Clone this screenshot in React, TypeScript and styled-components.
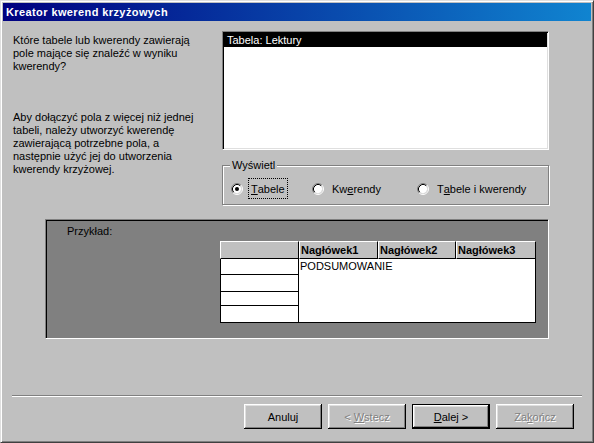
import styled, { createGlobalStyle, css } from "styled-components";

const Global = createGlobalStyle`
  html, body { margin: 0; padding: 0; background: #c0c0c0; }
  body {
    font-family: "Liberation Sans", Arial, sans-serif;
    font-size: 11px;
    color: #000;
  }
`;

const Window = styled.div`
  box-sizing: border-box;
  width: 594px;
  height: 443px;
  background: #c0c0c0;
  border: 1px solid;
  border-color: #dfdfdf #404040 #404040 #dfdfdf;
  box-shadow: inset 1px 1px #fff, inset -1px -1px #808080;
  padding: 2px;
  display: flex;
  flex-direction: column;
`;

const TitleBar = styled.div`
  height: 18px;
  flex: none;
  display: flex;
  align-items: center;
  padding-left: 3px;
  background: linear-gradient(to right, #000080, #1084d0);
  color: #fff;
  font-weight: bold;
  font-size: 11px;
  letter-spacing: 0.4px;
  white-space: nowrap;
`;

const Body = styled.div`
  flex: 1;
  display: flex;
  flex-direction: column;
`;

const Top = styled.div`
  display: flex;
  gap: 12px;
  padding: 10px 0 0 10px;
`;

const Intro = styled.div`
  width: 197px;
  padding-top: 3px;
  line-height: 13px;
  white-space: nowrap;
`;

const Para = styled.p<{ $gap?: number }>`
  margin: ${(p) => p.$gap ?? 0}px 0 0;
`;

const Side = styled.div`
  width: 327px;
  display: flex;
  flex-direction: column;
`;

const ListBox = styled.div`
  box-sizing: border-box;
  height: 119px;
  background: #fff;
  border: 1px solid;
  border-color: #808080 #fff #fff #808080;
  box-shadow: inset 1px 1px #000, inset -1px -1px #dfdfdf;
  padding: 1px;
`;

const ListItem = styled.div<{ $selected?: boolean }>`
  height: 14px;
  line-height: 14px;
  padding-left: 3px;
  white-space: nowrap;
  ${(p) =>
    p.$selected &&
    css`
      background: #000;
      color: #fff;
    `}
`;

const Group = styled.div`
  position: relative;
  box-sizing: border-box;
  margin-top: 15px;
  height: 40px;
  border: 1px solid #808080;
  box-shadow: inset 1px 1px #fff, 1px 1px #fff;
  padding: 12px 0 0 8px;
`;

const GroupLabel = styled.span`
  position: absolute;
  top: -7px;
  left: 7px;
  padding: 0 2px;
  line-height: 13px;
  background: #c0c0c0;
`;

const Options = styled.div`
  display: flex;
  height: 21px;
  align-items: center;
`;

const Option = styled.div<{ $w?: number }>`
  display: flex;
  align-items: center;
  gap: 5px;
  width: ${(p) => (p.$w ? `${p.$w}px` : "auto")};
  white-space: nowrap;
`;

const OptionText = styled.span<{ $focus?: boolean }>`
  box-sizing: border-box;
  height: 21px;
  display: flex;
  align-items: center;
  padding: 0 2px;
  border: 1px dotted ${(p) => (p.$focus ? "#000" : "transparent")};
`;

const Example = styled.div`
  box-sizing: border-box;
  margin: 14px 0 0 42px;
  width: 504px;
  height: 120px;
  background: #808080;
  border: 1px solid;
  border-color: #808080 #fff #fff #808080;
  box-shadow: inset 1px 1px #000;
  padding: 5px 0 0 21px;
`;

const ExampleLabel = styled.div`
  line-height: 13px;
`;

const Sheet = styled.div`
  margin: 3px 0 0 153px;
  width: 316px;
`;

const HeadRow = styled.div`
  display: flex;
`;

const HeadCell = styled.div<{ $w: number }>`
  box-sizing: border-box;
  width: ${(p) => p.$w}px;
  height: 18px;
  background: #c0c0c0;
  border-top: 1px solid #fff;
  border-left: 1px solid #fff;
  border-right: 1px solid #000;
  border-bottom: 1px solid #000;
  padding-left: 1px;
  font-weight: bold;
  line-height: 16px;
  white-space: nowrap;
`;

const SheetBody = styled.div`
  display: flex;
`;

const RowCol = styled.div`
  width: 79px;
`;

const RowCell = styled.div<{ $h: number }>`
  box-sizing: border-box;
  height: ${(p) => p.$h}px;
  background: #fff;
  border-left: 1px solid #000;
  border-right: 1px solid #000;
  border-bottom: 1px solid #000;
`;

const DataBox = styled.div`
  box-sizing: border-box;
  width: 237px;
  height: 64px;
  background: #fff;
  border-right: 1px solid #000;
  border-bottom: 1px solid #000;
  padding: 1px 0 0 1px;
  line-height: 13px;
`;

const Footer = styled.div`
  margin-top: auto;
  padding-bottom: 11px;
`;

const Separator = styled.div`
  margin: 0 9px;
  height: 1px;
  background: #808080;
  border-bottom: 1px solid #fff;
`;

const Buttons = styled.div`
  display: flex;
  justify-content: flex-end;
  gap: 6px;
  padding: 7px 17px 0 0;
`;

const Button = styled.button<{ $default?: boolean }>`
  box-sizing: border-box;
  width: 78px;
  height: 25px;
  padding: 0;
  background: #c0c0c0;
  border: none;
  box-shadow: inset -1px -1px #000, inset 1px 1px #fff, inset -2px -2px #808080,
    inset 2px 2px #dfdfdf;
  font-family: "Liberation Sans", Arial, sans-serif;
  font-size: 11px;
  color: #000;

  ${(p) =>
    p.$default &&
    css`
      border: 1px solid #000;
      box-shadow: inset -1px -1px #000, inset 1px 1px #fff,
        inset -2px -2px #808080, inset 2px 2px #dfdfdf;
    `}

  &:disabled {
    color: #808080;
    text-shadow: 1px 1px #fff;
  }
`;

function Radio({ checked }: { checked?: boolean }) {
  return (
    <svg width="12" height="12" viewBox="0 0 12 12" style={{ flex: "none" }}>
      <circle cx="6" cy="6" r="4.2" fill="#fff" />
      <path d="M2.11 9.89 A5.5 5.5 0 0 1 9.89 2.11" fill="none" stroke="#808080" />
      <path d="M9.89 2.11 A5.5 5.5 0 0 1 2.11 9.89" fill="none" stroke="#fff" />
      <path d="M2.82 9.18 A4.5 4.5 0 0 1 9.18 2.82" fill="none" stroke="#000" />
      <path d="M9.18 2.82 A4.5 4.5 0 0 1 2.82 9.18" fill="none" stroke="#dfdfdf" />
      {checked && <circle cx="6" cy="6" r="2" fill="#000" />}
    </svg>
  );
}

export default function App() {
  return (
    <>
      <Global />
      <Window>
        <TitleBar>Kreator kwerend krzyżowych</TitleBar>
        <Body>
          <Top>
            <Intro>
              <Para>
                Które tabele lub kwerendy zawierają
                <br />
                pole mające się znaleźć w wyniku
                <br />
                kwerendy?
              </Para>
              <Para $gap={38}>
                Aby dołączyć pola z więcej niż jednej
                <br />
                tabeli, należy utworzyć kwerendę
                <br />
                zawierającą potrzebne pola, a
                <br />
                następnie użyć jej do utworzenia
                <br />
                kwerendy krzyżowej.
              </Para>
            </Intro>
            <Side>
              <ListBox>
                <ListItem $selected>Tabela: Lektury</ListItem>
              </ListBox>
              <Group>
                <GroupLabel>Wyświetl</GroupLabel>
                <Options>
                  <Option $w={81}>
                    <Radio checked />
                    <OptionText $focus>
                      <u>T</u>abele
                    </OptionText>
                  </Option>
                  <Option $w={105}>
                    <Radio />
                    <OptionText>
                      Kw<u>e</u>rendy
                    </OptionText>
                  </Option>
                  <Option>
                    <Radio />
                    <OptionText>
                      T<u>a</u>bele i kwerendy
                    </OptionText>
                  </Option>
                </Options>
              </Group>
            </Side>
          </Top>

          <Example>
            <ExampleLabel>Przykład:</ExampleLabel>
            <Sheet>
              <HeadRow>
                <HeadCell $w={79} />
                <HeadCell $w={79}>Nagłówek1</HeadCell>
                <HeadCell $w={78}>Nagłówek2</HeadCell>
                <HeadCell $w={80}>Nagłówek3</HeadCell>
              </HeadRow>
              <SheetBody>
                <RowCol>
                  <RowCell $h={16} />
                  <RowCell $h={17} />
                  <RowCell $h={14} />
                  <RowCell $h={17} />
                </RowCol>
                <DataBox>PODSUMOWANIE</DataBox>
              </SheetBody>
            </Sheet>
          </Example>

          <Footer>
            <Separator />
            <Buttons>
              <Button>Anuluj</Button>
              <Button disabled>
                &lt; <u>W</u>stecz
              </Button>
              <Button $default>
                <u>D</u>alej &gt;
              </Button>
              <Button disabled>
                Za<u>k</u>ończ
              </Button>
            </Buttons>
          </Footer>
        </Body>
      </Window>
    </>
  );
}
